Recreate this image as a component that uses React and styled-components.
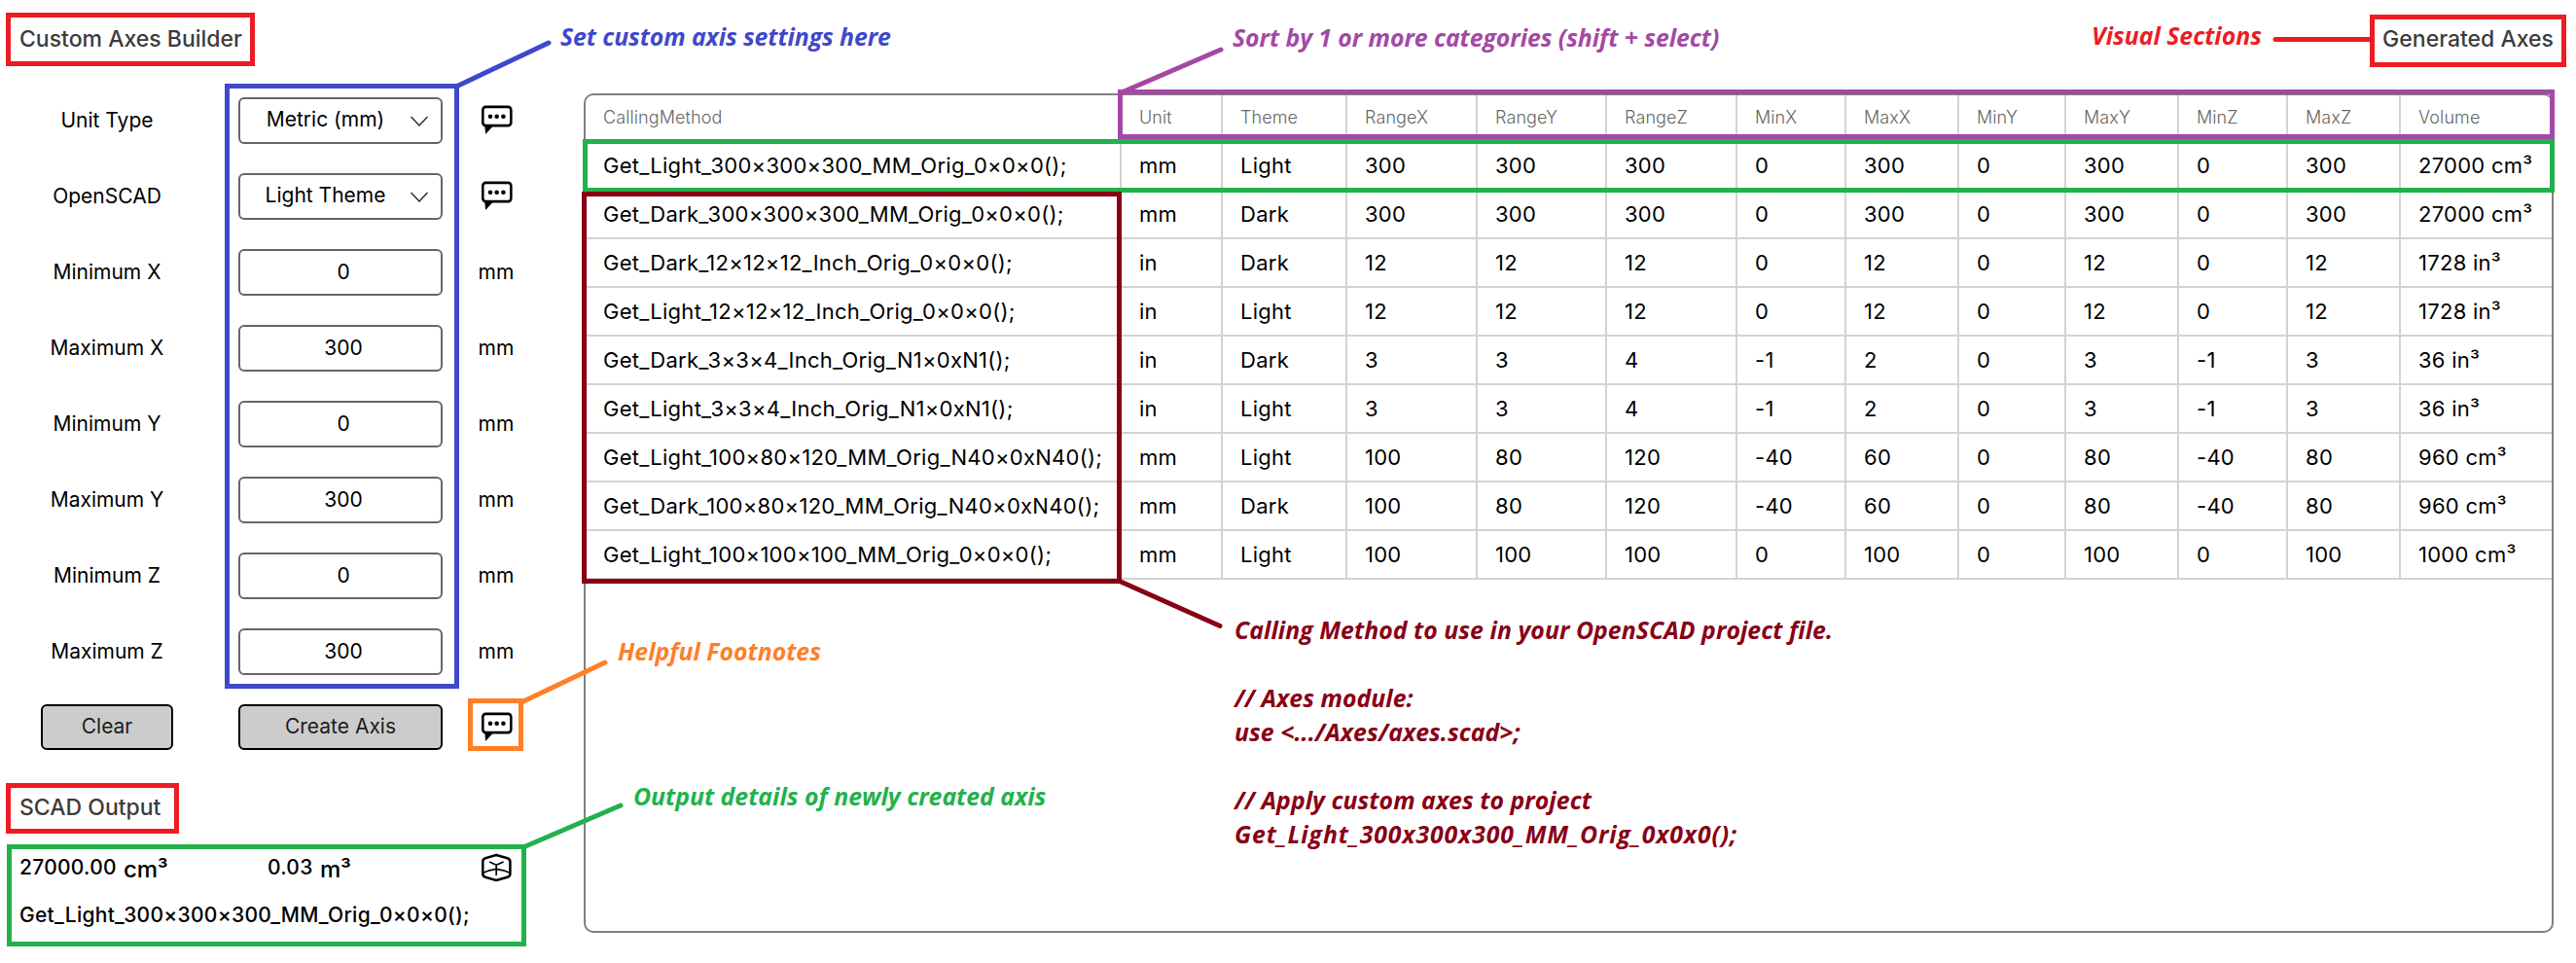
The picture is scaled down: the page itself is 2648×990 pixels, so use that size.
import React from 'react';
import styled, { createGlobalStyle } from 'styled-components';

const GlobalStyle = createGlobalStyle`
  * { box-sizing: border-box; }
  body {
    margin: 0;
    background: #fff;
    color: #000;
    font-family: Inter, "Liberation Sans", sans-serif;
  }
`;

const Page = styled.div`
  position: relative;
  display: flex;
  width: 2648px;
  height: 990px;
  overflow: hidden;
`;

const Sidebar = styled.aside`
  display: flex;
  flex-direction: column;
  width: 600px;
`;

const Main = styled.main`
  display: flex;
  flex-direction: column;
  width: 2025px;
`;

const SectionTitle = styled.h2`
  margin: 0;
  padding: ${p => (p.$end ? '0' : '0 0 0 20px')};
  text-align: ${p => (p.$end ? 'right' : 'left')};
  font-size: 23px;
  font-weight: 500;
  line-height: 80px;
  color: #3c3c3c;
`;

const Form = styled.form`
  display: flex;
  flex-direction: column;
  gap: 30px;
  margin: 20px 0 18px;
`;

const FormRow = styled.div`
  display: grid;
  grid-template-columns: 220px 260px 60px;
  justify-items: center;
  align-items: start;
  height: 48px;
  font-size: 21px;
  line-height: 48px;
`;

const Field = styled.div`
  display: flex;
  width: 210px;
  height: 48px;
  padding-left: 6px;
  border: 2px solid #666;
  border-radius: 6px;
  justify-content: center;
  line-height: 44px;
`;

const Select = styled(Field)`
  padding: 0 13px 0 0;
  align-items: center;
  line-height: 42px;
`;

const SelectText = styled.span`
  flex: 1;
  height: 44px;
  text-align: center;
`;

const Button = styled.button`
  width: ${p => p.$width}px;
  height: 47px;
  padding: 0 0 2px;
  border: 2px solid #000;
  border-radius: 6px;
  background: #ccc;
  color: #1c1c1c;
  font: 400 21px/41px Inter, "Liberation Sans", sans-serif;
`;

const IconSlot = styled.span`
  display: flex;
  align-items: center;
  height: 48px;
`;

const Output = styled.section`
  font-size: 21px;
  font-weight: 500;
  letter-spacing: 0.28px;
`;

const OutputRow = styled.div`
  display: grid;
  grid-template-columns: 107px 148px 54px 164px 34px;
  height: 44px;
  padding-left: 20px;
  line-height: 44px;
`;

const OutputUnit = styled.span`
  font-size: 24px;
  line-height: 47px;
  letter-spacing: -0.2px;
`;

const OutputIcon = styled.span`
  display: flex;
  padding-top: 7px;
`;

const OutputMethod = styled.div`
  padding-left: 20px;
  line-height: 54px;
`;

const TablePanel = styled.div`
  height: 863px;
  margin-top: 16px;
  border: 2px solid #808080;
  border-radius: 10px;
  overflow: hidden;
`;

const TableRow = styled.div`
  display: grid;
  grid-template-columns: 551px 104px 128px 134px 133px 134px 112px 116px 110px 116px 112px 116px 155px;
  height: ${p => (p.$head ? 48 : 50)}px;
  border-bottom: 2px solid #d3d3d3;
  color: ${p => (p.$head ? '#666' : '#000')};
  font-size: ${p => (p.$head ? 18 : 22)}px;
  font-weight: ${p => (p.$head ? 300 : 400)};
  line-height: ${p => (p.$head ? 46 : 48)}px;
  letter-spacing: ${p => (p.$head ? 0.1 : 0.27)}px;
`;

const Cell = styled.div`
  padding-left: 18px;
  border-right: 2px solid #d3d3d3;
  white-space: nowrap;
  &:last-child { border-right: 0; }
`;

const Outline = styled.div`
  position: absolute;
  left: ${p => p.$x}px;
  top: ${p => p.$y}px;
  width: ${p => p.$w}px;
  height: ${p => p.$h}px;
  border: 5px solid ${p => p.$color};
`;

const Leaders = styled.svg`
  position: absolute;
  left: 0;
  top: 0;
`;

const Note = styled.p`
  position: absolute;
  left: ${p => p.$x}px;
  top: ${p => p.$y}px;
  margin: 0;
  color: ${p => p.$color};
  font: italic 700 24.8px/35px "Open Sans", "Noto Sans", sans-serif;
  letter-spacing: ${p => p.$spacing || 0}px;
  white-space: pre;
`;

const CodeLine = styled.span`
  letter-spacing: 0.9px;
`;

const RED = '#ed1c24';
const BLUE = '#3f48cc';
const PURPLE = '#a349a4';
const GREEN = '#22b14c';
const MAROON = '#880015';
const ORANGE = '#ff7f27';

const outlines = [
  [6, 13, 256, 55, RED],
  [6, 805, 178, 52, RED],
  [2436, 15, 202, 54, RED],
  [231, 86, 241, 622, BLUE],
  [1149, 92, 1477, 51, PURPLE],
  [599, 143, 2027, 55, GREEN],
  [598, 197, 555, 403, MAROON],
  [481, 718, 57, 54, ORANGE],
  [7, 868, 534, 105, GREEN],
];

const leaders = [
  [470, 88.5, 564, 44, BLUE],
  [1153, 95, 1255, 51, PURPLE],
  [2339, 40.5, 2438, 40.5, RED],
  [1151, 597.5, 1254, 643.5, MAROON],
  [536, 722, 622, 681, ORANGE],
  [538, 871, 638, 828, GREEN],
];

const fields = [
  ['Minimum X', '0'],
  ['Maximum X', '300'],
  ['Minimum Y', '0'],
  ['Maximum Y', '300'],
  ['Minimum Z', '0'],
  ['Maximum Z', '300'],
];

const columns = ['CallingMethod', 'Unit', 'Theme', 'RangeX', 'RangeY', 'RangeZ', 'MinX', 'MaxX', 'MinY', 'MaxY', 'MinZ', 'MaxZ', 'Volume'];

const rows = [
  ['Get_Light_300×300×300_MM_Orig_0×0×0();', 'mm', 'Light', 300, 300, 300, 0, 300, 0, 300, 0, 300, '27000 cm³'],
  ['Get_Dark_300×300×300_MM_Orig_0×0×0();', 'mm', 'Dark', 300, 300, 300, 0, 300, 0, 300, 0, 300, '27000 cm³'],
  ['Get_Dark_12×12×12_Inch_Orig_0×0×0();', 'in', 'Dark', 12, 12, 12, 0, 12, 0, 12, 0, 12, '1728 in³'],
  ['Get_Light_12×12×12_Inch_Orig_0×0×0();', 'in', 'Light', 12, 12, 12, 0, 12, 0, 12, 0, 12, '1728 in³'],
  ['Get_Dark_3×3×4_Inch_Orig_N1×0xN1();', 'in', 'Dark', 3, 3, 4, -1, 2, 0, 3, -1, 3, '36 in³'],
  ['Get_Light_3×3×4_Inch_Orig_N1×0xN1();', 'in', 'Light', 3, 3, 4, -1, 2, 0, 3, -1, 3, '36 in³'],
  ['Get_Light_100×80×120_MM_Orig_N40×0xN40();', 'mm', 'Light', 100, 80, 120, -40, 60, 0, 80, -40, 80, '960 cm³'],
  ['Get_Dark_100×80×120_MM_Orig_N40×0xN40();', 'mm', 'Dark', 100, 80, 120, -40, 60, 0, 80, -40, 80, '960 cm³'],
  ['Get_Light_100×100×100_MM_Orig_0×0×0();', 'mm', 'Light', 100, 100, 100, 0, 100, 0, 100, 0, 100, '1000 cm³'],
];

const usage = `Calling Method to use in your OpenSCAD project file.

// Axes module:
use <.../Axes/axes.scad>;

// Apply custom axes to project
`;

const CommentIcon = () => (
  <svg width="34" height="32" viewBox="0 0 34 32">
    <rect x="3.3" y="1.9" width="29" height="19.2" rx="3" fill="none" stroke="#000" strokeWidth="2.6" />
    <path d="M5.3 20.5h8.4v1.2L6.6 29.4H6z" fill="#000" />
    <circle cx="11" cy="11.7" r="2.3" />
    <circle cx="17.7" cy="11.7" r="2.3" />
    <circle cx="24.4" cy="11.7" r="2.3" />
  </svg>
);

const AxesIcon = () => (
  <svg width="34" height="30" viewBox="0 0 34 30" fill="none" stroke="#000" strokeLinejoin="round">
    <path d="M17.2 2 28.6 5.2Q31.4 6.2 31.4 8.6V21.4Q31.4 23.9 28.6 24.8L17.2 28 6 24.8Q3.3 23.9 3.3 21.4V8.6Q3.3 6.2 6 5.2Z" strokeWidth="2.5" />
    <path d="M3.8 20.2 10 17.8 17.2 16.4 24.4 17.8 31 20.2M10 9 17.2 12.2 24.6 9M17.2 12.2V23" strokeWidth="1.7" />
  </svg>
);

const Chevron = () => (
  <svg width="18" height="11" viewBox="0 0 18 11" fill="none" stroke="#222" strokeWidth="1.3">
    <path d="M0.5 1 9 10 17.5 1" />
  </svg>
);

const SelectRow = ({ label, value }) => (
  <FormRow>
    <span>{label}</span>
    <Select>
      <SelectText>{value}</SelectText>
      <Chevron />
    </Select>
    <IconSlot><CommentIcon /></IconSlot>
  </FormRow>
);

export default function App() {
  return (
    <Page>
      <GlobalStyle />
      <Sidebar>
        <SectionTitle>Custom Axes Builder</SectionTitle>
        <Form>
          <SelectRow label="Unit Type" value="Metric (mm)" />
          <SelectRow label="OpenSCAD" value="Light Theme" />
          {fields.map(([label, value]) => (
            <FormRow key={label}>
              <span>{label}</span>
              <Field>{value}</Field>
              <span>mm</span>
            </FormRow>
          ))}
          <FormRow>
            <Button type="button" $width={136}>Clear</Button>
            <Button type="button" $width={210}>Create Axis</Button>
            <IconSlot><CommentIcon /></IconSlot>
          </FormRow>
        </Form>
        <SectionTitle>SCAD Output</SectionTitle>
        <Output>
          <OutputRow>
            <span>27000.00</span>
            <OutputUnit>cm³</OutputUnit>
            <span>0.03</span>
            <OutputUnit>m³</OutputUnit>
            <OutputIcon><AxesIcon /></OutputIcon>
          </OutputRow>
          <OutputMethod>Get_Light_300×300×300_MM_Orig_0×0×0();</OutputMethod>
        </Output>
      </Sidebar>
      <Main>
        <SectionTitle $end>Generated Axes</SectionTitle>
        <TablePanel>
          <TableRow $head>
            {columns.map(c => <Cell key={c}>{c}</Cell>)}
          </TableRow>
          {rows.map(r => (
            <TableRow key={r[0]}>
              {r.map((v, i) => <Cell key={columns[i]}>{v}</Cell>)}
            </TableRow>
          ))}
        </TablePanel>
      </Main>

      {outlines.map(([x, y, w, h, color]) => (
        <Outline key={`${x}-${y}`} $x={x} $y={y} $w={w} $h={h} $color={color} />
      ))}
      <Leaders width="2648" height="990" fill="none" strokeWidth="5" strokeLinecap="round">
        {leaders.map(([x1, y1, x2, y2, color]) => (
          <line key={x1} x1={x1} y1={y1} x2={x2} y2={y2} stroke={color} />
        ))}
      </Leaders>
      <Note $x={576} $y={20} $color={BLUE} $spacing={-0.08}>Set custom axis settings here</Note>
      <Note $x={1267} $y={21} $color={PURPLE} $spacing={-0.05}>Sort by 1 or more categories (shift + select)</Note>
      <Note $x={2150} $y={19} $color={RED}>Visual Sections</Note>
      <Note $x={635} $y={652} $color={ORANGE}>Helpful Footnotes</Note>
      <Note $x={651} $y={801} $color={GREEN}>Output details of newly created axis</Note>
      <Note $x={1269} $y={630} $color={MAROON} $spacing={0.05}>
        {usage}
        <CodeLine>Get_Light_300x300x300_MM_Orig_0x0x0();</CodeLine>
      </Note>
    </Page>
  );
}
